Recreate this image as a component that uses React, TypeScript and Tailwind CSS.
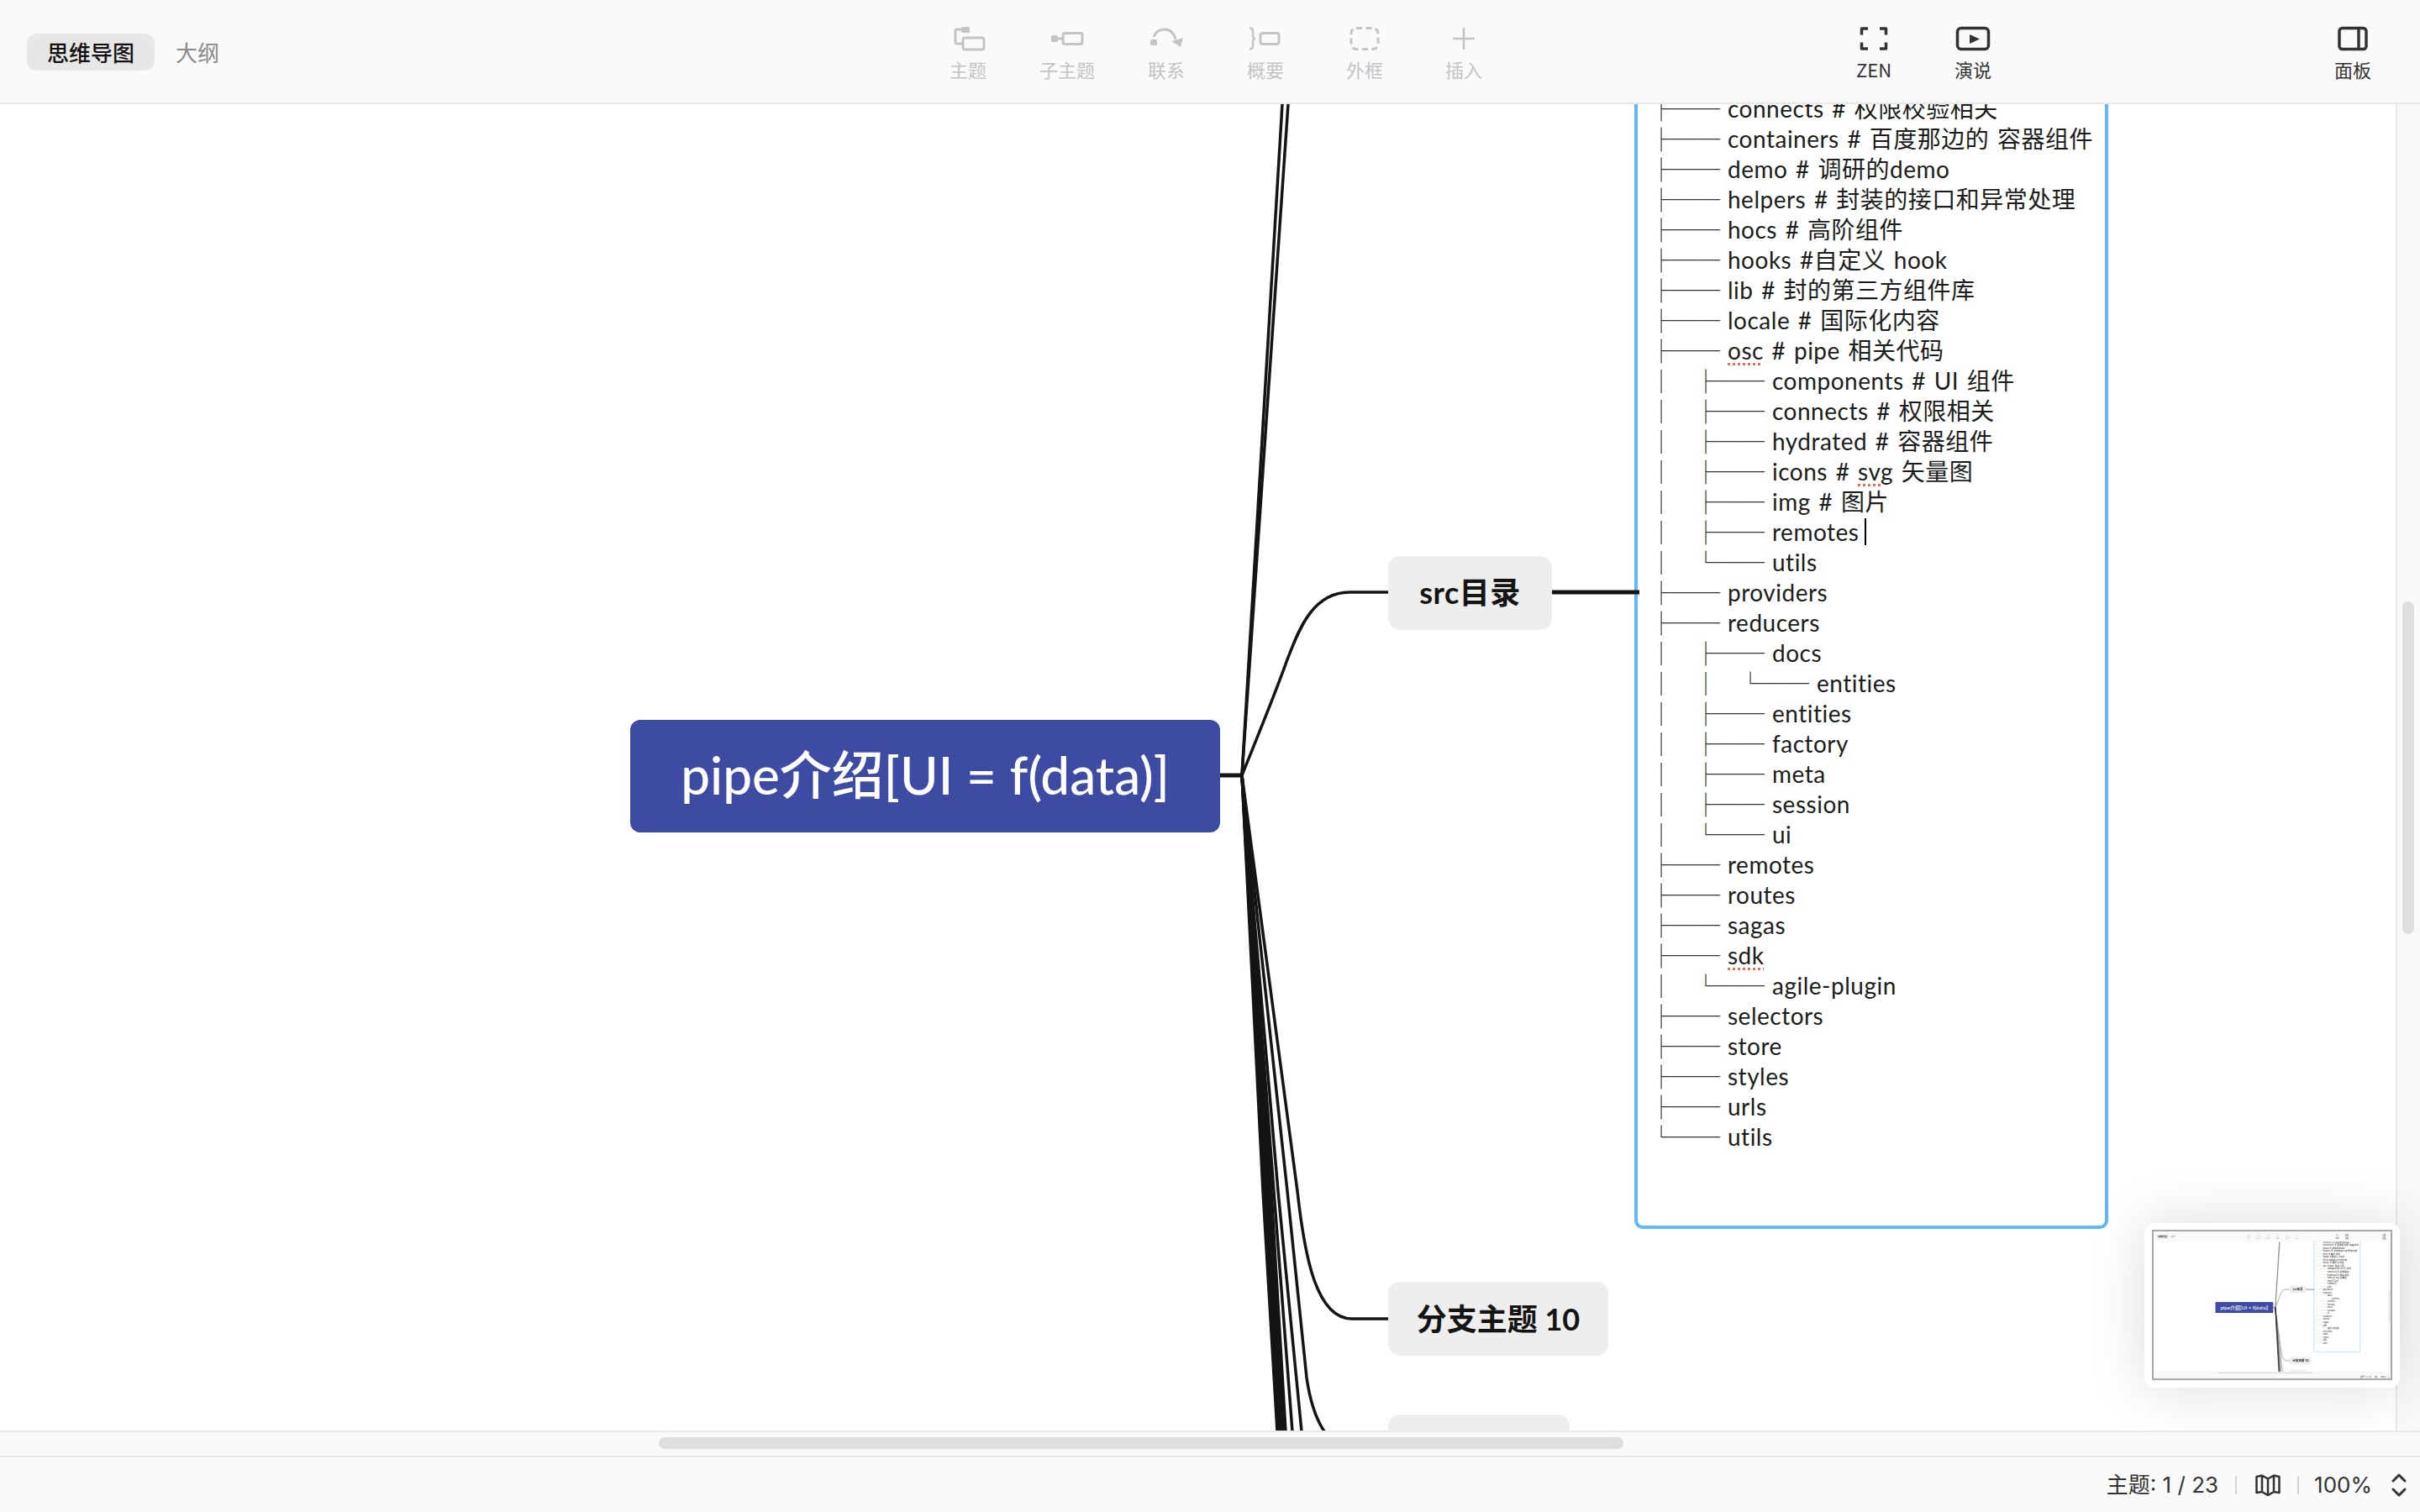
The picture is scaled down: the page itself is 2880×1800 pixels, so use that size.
import type { ReactNode } from "react";

const TOOLS_OFF = [
  {
    label: "主题",
    icon: (
      <>
        <rect x="14" y="8" width="10" height="7" rx="1.5" fill="currentColor" stroke="none" />
        <path d="M15 11H9a2 2 0 0 0-2 2v13a2 2 0 0 0 2 2h6" />
        <rect x="16" y="21" width="25" height="14" rx="2.5" />
      </>
    ),
  },
  {
    label: "子主题",
    icon: (
      <>
        <rect x="3" y="18" width="8" height="8" rx="1.5" fill="currentColor" stroke="none" />
        <path d="M10 22h7" />
        <rect x="17" y="15.5" width="23" height="13" rx="2.5" />
      </>
    ),
  },
  {
    label: "联系",
    icon: (
      <>
        <rect x="3" y="23" width="8" height="7" rx="1.5" fill="currentColor" stroke="none" />
        <path d="M7 20c2-6 7-9 13-9 6 0 11 4 13 12" />
        <path d="M28 25l14-4-3 11z" fill="currentColor" stroke="none" />
      </>
    ),
  },
  {
    label: "概要",
    icon: (
      <>
        <path d="M3 9.500c3 0 4 1 4 3.500v5c0 3 1 4 3 4-2 0-3 1-3 4v5c0 2.500-1 3.500-4 3.500" strokeWidth="2.500" />
        <rect x="16" y="15.500" width="22" height="13" rx="2.500" />
      </>
    ),
  },
  {
    label: "外框",
    icon: <rect x="6" y="9.500" width="32" height="25" rx="6" strokeDasharray="7 4.500" />,
  },
  {
    label: "插入",
    icon: <path d="M22 9v26M9 22h26" strokeWidth="2.500" />,
  },
];

function Tool({ label, off, icon }: { label: string; off?: boolean; icon: ReactNode }) {
  return (
    <div className={off ? "flex w-[118px] flex-col items-center text-[#c4c4c4]" : "flex w-[118px] flex-col items-center text-[#333333]"}>
      <svg width="44" height="44" viewBox="0 0 44 44" fill="none" stroke="currentColor" strokeWidth="3">
        {icon}
      </svg>
      <span className="-mt-[1px] text-[22px] leading-[30px]">{label}</span>
    </div>
  );
}

const TREE: { lead: number; last?: boolean; text: string; err?: string; caret?: boolean }[] = [
  { lead: 0, text: "connects # 权限校验相关" },
  { lead: 0, text: "containers # 百度那边的 容器组件" },
  { lead: 0, text: "demo # 调研的demo" },
  { lead: 0, text: "helpers # 封装的接口和异常处理" },
  { lead: 0, text: "hocs # 高阶组件" },
  { lead: 0, text: "hooks #自定义 hook" },
  { lead: 0, text: "lib # 封的第三方组件库" },
  { lead: 0, text: "locale # 国际化内容" },
  { lead: 0, text: "osc # pipe 相关代码", err: "osc" },
  { lead: 1, text: "components # UI 组件" },
  { lead: 1, text: "connects # 权限相关" },
  { lead: 1, text: "hydrated # 容器组件" },
  { lead: 1, text: "icons # svg 矢量图", err: "svg" },
  { lead: 1, text: "img # 图片" },
  { lead: 1, text: "remotes", caret: true },
  { lead: 1, last: true, text: "utils" },
  { lead: 0, text: "providers" },
  { lead: 0, text: "reducers" },
  { lead: 1, text: "docs" },
  { lead: 2, last: true, text: "entities" },
  { lead: 1, text: "entities" },
  { lead: 1, text: "factory" },
  { lead: 1, text: "meta" },
  { lead: 1, text: "session" },
  { lead: 1, last: true, text: "ui" },
  { lead: 0, text: "remotes" },
  { lead: 0, text: "routes" },
  { lead: 0, text: "sagas" },
  { lead: 0, text: "sdk", err: "sdk" },
  { lead: 1, last: true, text: "agile-plugin" },
  { lead: 0, text: "selectors" },
  { lead: 0, text: "store" },
  { lead: 0, text: "styles" },
  { lead: 0, text: "urls" },
  { lead: 0, last: true, text: "utils" },
];

function TreeRow({ lead, last, text, err, caret }: (typeof TREE)[number]) {
  const parts = err ? text.split(err) : [text];
  return (
    <div className="flex h-[36px] items-center whitespace-pre text-[28px] tracking-[0.5px] text-[#1c1c1c] [word-spacing:2px]">
      {Array.from({ length: lead }).map((_, i) => (
        <span key={i} className="w-[53px] shrink-0 font-['Noto_Sans_CJK_SC'] tracking-normal text-[#333333]">
          │
        </span>
      ))}
      <span className="w-[93px] shrink-0 font-['Noto_Sans_CJK_SC'] tracking-normal text-[#333333]">{last ? "└──" : "├──"}</span>
      <span>
        {parts[0]}
        {err && <span className="underline decoration-[#ec6a5e] decoration-dotted decoration-[3px] underline-offset-[4px]">{err}</span>}
        {parts[1]}
      </span>
      {caret && <span className="ml-[7px] inline-block h-[32px] w-[2px] bg-black" />}
    </div>
  );
}

// trunk strands that merge into the black wedge under the root
const BUNDLE = [
  [1503, 1520],
  [1505, 1521],
  [1507, 1523],
  [1509, 1525],
  [1511, 1527],
  [1513, 1530],
];

function Branches() {
  return (
    <svg
      className="absolute top-0 left-0"
      width="2851"
      height="1580"
      viewBox="0 124 2851 1580"
      fill="none"
      stroke="#141414"
      strokeWidth="3.500"
    >
      <path d="M1452 923H1478" strokeWidth="5" />
      <path d="M1478 923L1526 124" />
      <path d="M1478 923L1533 124" />
      <path d="M1478 923C1496 878 1518 825 1532 785C1544 755 1560 705 1606 705H1652" />
      <path d="M1847 705H1951" strokeWidth="5" />
      {BUNDLE.map(([a, b]) => (
        <path key={a} d={`M1478 923L${a} 1418L${b} 1704`} />
      ))}
      <path d="M1478 923L1516 1418L1538 1704" />
      <path d="M1478 923L1521 1418L1549 1704" />
      <path d="M1478 923L1532 1418L1555 1640C1560 1675 1568 1692 1576 1704" />
      <path d="M1478 923L1544 1418C1552 1490 1565 1570 1609 1570H1652" strokeLinejoin="round" />
    </svg>
  );
}

function Workspace() {
  return (
    <div className="flex h-[1800px] w-[2880px] flex-col overflow-hidden bg-white font-['Lato','Noto_Sans_CJK_SC',sans-serif]">
      {/* toolbar */}
      <header className="flex h-[124px] shrink-0 items-start border-b-2 border-[#e8e8e8] bg-[#fafafa] font-['Noto_Sans_CJK_SC',sans-serif]">
        <div className="flex w-[1093px] items-center pt-[40px] pl-[32px]">
          <span className="flex h-[44px] w-[152px] items-center justify-center rounded-[12px] bg-[#e7e7e7] pb-[2px] text-[26px] font-medium text-[#111111]">
            思维导图
          </span>
          <span className="ml-[25px] pb-[2px] text-[26px] text-[#8a8a8a]">大纲</span>
        </div>
        <div className="flex pt-[24px]">
          {TOOLS_OFF.map((t) => (
            <Tool key={t.label} off label={t.label} icon={t.icon} />
          ))}
        </div>
        <div className="ml-[370px] flex pt-[24px]">
          <Tool
            label="ZEN"
            icon={<path d="M15 10H7.500v7.500M29 10h7.500v7.500M15 34H7.500v-7.500M29 34h7.500v-7.500" strokeWidth="3.500" strokeLinejoin="round" />}
          />
          <Tool
            label="演说"
            icon={
              <>
                <rect x="3.500" y="9.500" width="37" height="25" rx="4.500" strokeWidth="3.500" />
                <path d="M18 17l12 5.500L18 28z" fill="currentColor" stroke="none" />
              </>
            }
          />
        </div>
        <div className="ml-[334px] flex pt-[24px]">
          <Tool
            label="面板"
            icon={
              <>
                <rect x="6" y="9.500" width="32" height="25" rx="3.500" strokeWidth="3.500" />
                <path d="M29 9.500v25" strokeWidth="3.500" />
              </>
            }
          />
        </div>
      </header>

      {/* canvas + vertical scrollbar */}
      <div className="flex min-h-0 flex-1">
        <main className="relative flex-1 overflow-hidden">
          <div className="absolute top-[733px] left-[750px] flex h-[134px] w-[702px] items-center justify-center rounded-[12px] bg-[#3e4ba3] pb-[3px] text-[62px] font-medium text-white">
            pipe介绍[UI = f(data)]
          </div>

          <div className="absolute top-[538px] left-[1652px] flex h-[88px] w-[195px] items-center justify-center rounded-[14px] bg-[#eeeeee] pb-[2px] text-[36px] font-bold tracking-[0.5px] text-[#141414]">
            src目录
          </div>

          <div className="absolute top-[1402px] left-[1652px] flex h-[88px] w-[262px] items-center justify-center rounded-[14px] bg-[#eeeeee] text-[36px] font-bold text-[#141414]">
            分支主题 10
          </div>

          <div className="absolute top-[1560px] left-[1652px] h-[88px] w-[216px] rounded-[14px] bg-[#eeeeee]" />

          <div className="absolute top-[-60px] left-[1945px] h-[1399px] w-[564px] rounded-[10px] border-4 border-[#5fb8fb] bg-white pt-[43px] pl-[14px]">
            {TREE.map((row, i) => (
              <TreeRow key={i} {...row} />
            ))}
          </div>

          <Branches />
        </main>
        <div className="w-[29px] shrink-0 border-l-2 border-[#e8e8e8] bg-[#f9f9f9] pt-[592px] pl-[6px]">
          <div className="h-[396px] w-[14px] rounded-[7px] bg-[#dedede]" />
        </div>
      </div>

      {/* horizontal scrollbar */}
      <div className="h-[32px] shrink-0 border-y-2 border-[#e8e8e8] bg-[#f9f9f9] pt-[6px] pl-[784px]">
        <div className="h-[14px] w-[1148px] rounded-[7px] bg-[#dedede]" />
      </div>

      {/* status bar */}
      <footer className="flex h-[65px] shrink-0 items-center justify-end bg-[#fafafa] pr-[16px] font-['Inter','Noto_Sans_CJK_SC',sans-serif] text-[26px] text-[#333333]">
        <span>主题: 1 / 23</span>
        <span className="ml-[20px] mr-[22px] h-[22px] w-[2px] bg-[#d4d4d4]" />
        <svg width="30" height="26" viewBox="0 0 30 26" fill="none" stroke="currentColor" strokeWidth="2.500" strokeLinejoin="round">
          <path d="M15 5.500L8 1.500 1.500 3v19L8 21l7 4 7-4 6.500 1V3L22 1.500zM15 5.500V25M8 1.500V21M22 1.500V21" />
        </svg>
        <span className="ml-[20px] mr-[18px] h-[22px] w-[2px] bg-[#d4d4d4]" />
        <span>100%</span>
        <svg className="ml-[23px]" width="18" height="30" viewBox="0 0 18 30" fill="none" stroke="currentColor" strokeWidth="3" strokeLinecap="round" strokeLinejoin="round">
          <path d="M2 10l7-7 7 7M2 20l7 7 7-7" />
        </svg>
      </footer>
    </div>
  );
}

export default function App() {
  return (
    <div className="relative h-[1800px] w-[2880px] overflow-hidden">
      <Workspace />

      {/* minimap */}
      <div className="absolute top-[1456px] left-[2552px] h-[196px] w-[304px] rounded-[12px] bg-white pt-[8px] pl-[9px] shadow-[0_0_70px_rgba(0,0,0,0.14)]">
        <div className="h-[179px] w-[286px] overflow-hidden border-2 border-[#a8a8a8]">
          <div className="origin-top-left scale-[0.098]">
            <Workspace />
          </div>
        </div>
      </div>
    </div>
  );
}
